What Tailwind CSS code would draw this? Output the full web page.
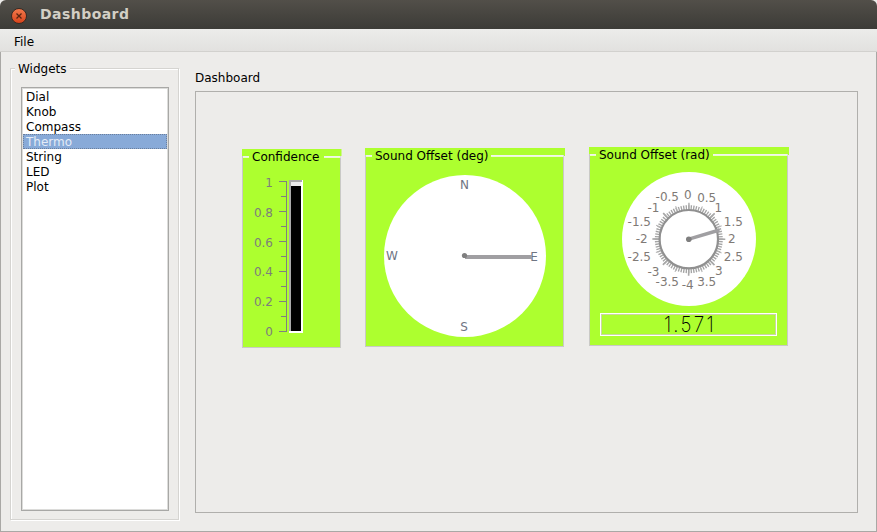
<!doctype html>
<html>
<head>
<meta charset="utf-8">
<script src="https://cdn.jsdelivr.net/npm/@tailwindcss/browser@4"></script>
</head>
<body class="bg-[#edecea]">
<div class="w-[877px] h-[532px] overflow-hidden flex flex-col bg-[#edecea] font-['DejaVu_Sans',sans-serif] text-[12px] leading-[15px] text-black">
  <header class="h-[29px] shrink-0 flex items-center rounded-t-[6px] bg-gradient-to-b from-[#524f49] to-[#3c3b37] pl-[11px]">
    <div class="w-[16px] h-[16px] rounded-full bg-gradient-to-b from-[#f2784a] to-[#d8431a] flex items-center justify-center mt-[2px] border border-[#3a2a22]">
      <svg width="8" height="8" viewBox="0 0 8 8"><path d="M1.5 1.5 L6.5 6.5 M6.5 1.5 L1.5 6.5" stroke="#5a2410" stroke-width="1.3"/></svg>
    </div>
    <span class="ml-[13px] font-bold text-[14px] tracking-[0.45px] text-[#d3cfc5] -mt-[1px]">Dashboard</span>
  </header>
  <nav class="h-[23px] shrink-0 bg-gradient-to-b from-[#ececea] to-[#e2e1df] border-b border-[#d2d1ce] pl-[14px] pt-[4px] flex items-center">File</nav>
  <main class="flex-1 flex border-l border-r border-b border-[#a9a8a5] pl-[9px] pt-[16px] pb-[10px]">
    <section class="relative w-[169px] h-[452px] border border-[#d5d4d1] shadow-[inset_1px_1px_0_#fff,1px_1px_0_#fff] pt-[18px] pl-[10px]">
      <span class="absolute -top-[7px] left-[4px] bg-[#edecea] px-[3px]">Widgets</span>
      <ul class="w-[148px] h-[424px] bg-white border border-[#a8a8a6] shadow-[inset_0_0_0_1px_#dcdcda] pt-[2px] pl-[1px] pr-[1px]">
        <li class="pl-[3px]">Dial</li>
        <li class="pl-[3px]">Knob</li>
        <li class="pl-[3px]">Compass</li>
        <li class="relative -top-[1px] pl-[2px] bg-[#88aad8] text-[#e4ecf7] border border-dotted border-[#6b7f9c] h-[15px] leading-[15px]">Thermo</li>
        <li class="pl-[3px]">String</li>
        <li class="pl-[3px]">LED</li>
        <li class="pl-[3px]">Plot</li>
      </ul>
    </section>
    <section class="ml-[16px] flex flex-col">
      <h2 class="h-[24px] -mt-[1px] pt-[4px] font-normal">Dashboard</h2>
      <div class="w-[663px] h-[422px] border border-[#b0afac] flex items-start">

        <div class="relative w-[100px] h-[199px] ml-[46px] mt-[57px] shrink-0">
          <svg width="100" height="199" viewBox="242 149 100 199" class="block font-['DejaVu_Sans',sans-serif] text-[12px]">
            <rect x="242" y="149" width="99.5" height="7" fill="#adff2f"/>
            <rect x="242.5" y="156.5" width="98" height="191" fill="#adff2f" stroke="#c9c9c6"/>
            <path d="M243 157H340.5" stroke="#fff" stroke-width="1.4"/>
            <rect x="249" y="150" width="75" height="14" fill="#adff2f"/>
            <text x="252" y="161" fill="#000">Confidence</text>
            <g fill="#7d7d7d" text-anchor="end">
              <text x="273" y="187">1</text><text x="273" y="217">0.8</text><text x="273" y="247">0.6</text><text x="273" y="276">0.4</text><text x="273" y="306">0.2</text><text x="273" y="336">0</text>
            </g>
            <path d="M286.5 181V332M279 181.5h8M279 211.5h8M279 241.5h8M279 271.5h8M279 301.5h8M279 331.5h8M281 196.5h6M281 226.5h6M281 256.5h6M281 286.5h6M281 316.5h6" stroke="#808080" fill="none"/>
            <rect x="289" y="180" width="14" height="153" fill="#fff"/>
            <rect x="289" y="180" width="13" height="2" fill="#aaa"/>
            <rect x="289" y="180" width="2" height="151" fill="#aaa"/>
            <rect x="291" y="182" width="10" height="4" fill="#ececec"/>
            <rect x="291" y="186" width="10" height="145" fill="#000"/>
          </svg>
        </div>

        <div class="relative w-[200px] h-[199px] ml-[23px] mt-[56px] shrink-0">
          <svg width="200" height="199" viewBox="365 148 200 199" class="block font-['DejaVu_Sans',sans-serif] text-[12px]">
            <rect x="365" y="148" width="200" height="8" fill="#adff2f"/>
            <rect x="365.5" y="155.5" width="198" height="191" fill="#adff2f" stroke="#c9c9c6"/>
            <path d="M366 156H563.5" stroke="#fff" stroke-width="1.4"/>
            <rect x="372" y="149" width="119" height="14" fill="#adff2f"/>
            <text x="375" y="160" fill="#000">Sound Offset (deg)</text>
            <circle cx="465" cy="256" r="81" fill="#fff"/>
            <g fill="#6f7583" text-anchor="middle">
              <text x="464.5" y="189">N</text><text x="464" y="330.5">S</text><text x="392" y="260">W</text><text x="534" y="260.5">E</text>
            </g>
            <path d="M465 257H532" stroke="#a09fa2" stroke-width="4"/>
            <circle cx="464.5" cy="255.5" r="2.6" fill="#7f7f7f"/>
          </svg>
        </div>

        <div class="relative w-[200px] h-[199px] ml-[24px] mt-[55px] shrink-0">
          <svg width="200" height="199" viewBox="589 147 200 199" class="absolute inset-0 block font-['DejaVu_Sans',sans-serif] text-[12px]">
            <rect x="589" y="147" width="200" height="8" fill="#adff2f"/>
            <rect x="589.5" y="154.5" width="198" height="191" fill="#adff2f" stroke="#c9c9c6"/>
            <path d="M590 155H787.5" stroke="#fff" stroke-width="1.4"/>
            <rect x="596" y="148" width="117" height="14" fill="#adff2f"/>
            <text x="599" y="159" fill="#000">Sound Offset (rad)</text>
            <circle cx="689" cy="239" r="67" fill="#fff"/>
            <g transform="translate(688.8 239.2) rotate(-90)" fill="none" stroke="#a4a4a4">
              <circle r="31.5" stroke-width="5" stroke-dasharray="1.3 1.17" stroke-dashoffset="0.65"/>
              <circle r="32" stroke-width="7" stroke="#b4b4b4" stroke-dasharray="1 11.57" stroke-dashoffset="0.5"/>
              <circle r="32.5" stroke-width="8" stroke="#a8a8a8" stroke-dasharray="1.5 24.02" stroke-dashoffset="0.75"/>
              <circle r="29.2" stroke-width="2.2" stroke="#909090"/>
            </g>
            <g fill="#7f7a76" text-anchor="middle" dominant-baseline="central">
              <text x="687.7" y="195">0</text><text x="706.7" y="197.7">0.5</text><text x="718.3" y="207.7">1</text><text x="733.3" y="222.3">1.5</text>
              <text x="731.7" y="239.3">2</text><text x="733.3" y="256.7">2.5</text><text x="718.7" y="271">3</text><text x="706.7" y="281.7">3.5</text>
              <text x="687.7" y="285">-4</text><text x="667.3" y="281.7">-3.5</text><text x="653.5" y="271.7">-3</text><text x="639.3" y="256.7">-2.5</text>
              <text x="641.7" y="239.3">-2</text><text x="639.3" y="222.3">-1.5</text><text x="653.5" y="207.7">-1</text><text x="667.3" y="196.7">-0.5</text>
            </g>
            <path d="M688.8 239.2L719.5 230" stroke="#a09fa2" stroke-width="3.4"/>
            <circle cx="688.8" cy="239.2" r="2.8" fill="#7f7f7f"/>
          </svg>
          <div class="absolute left-[11px] top-[166px] w-[177px] h-[23px] border border-white shadow-[inset_0_0_0_1px_#c9d8a0] flex items-center justify-center text-black">
            <span class="ml-[3px] font-['Inter',sans-serif] font-extralight text-[21px] leading-[20px] tracking-[2.5px] scale-x-[0.9]">1.571</span>
          </div>
        </div>

      </div>
    </section>
  </main>
</div>
</body>
</html>
